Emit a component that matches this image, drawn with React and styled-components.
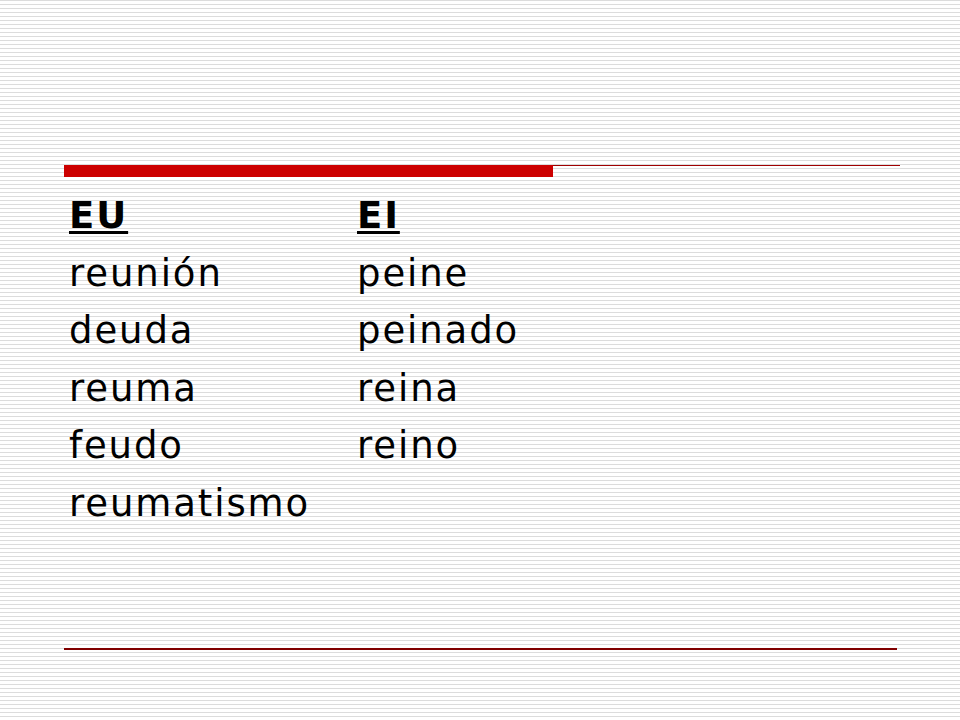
import React from "react";
import styled, { createGlobalStyle } from "styled-components";

const GlobalStyle = createGlobalStyle`
  html, body {
    margin: 0;
    padding: 0;
  }
  body {
    width: 960px;
    height: 720px;
    overflow: hidden;
    font-family: "DejaVu Sans", Verdana, sans-serif;
  }
`;

const Slide = styled.div`
  width: 960px;
  height: 720px;
  box-sizing: border-box;
  padding: 165px 60px 0 64px;
  display: flex;
  flex-direction: column;
  background-color: #fff;
  background-image: repeating-linear-gradient(
    to bottom,
    #dcdcdc 0px,
    #dcdcdc 1px,
    #ffffff 1px,
    #ffffff 4px
  );
`;

const TopRule = styled.div`
  display: flex;
  align-items: flex-start;
  height: 12px;
`;

const RedBar = styled.div`
  width: 489px;
  height: 12px;
  background: #cc0000;
`;

const ThinLine = styled.div`
  flex: 1;
  height: 1px;
  background: #a00000;
`;

const Columns = styled.div`
  display: grid;
  grid-template-columns: 288px 1fr;
  padding: 10px 0 0 5px;
  height: 461px;
`;

const Column = styled.div`
  display: flex;
  flex-direction: column;
`;

const Word = styled.div`
  font-size: 37px;
  letter-spacing: 1.9px;
  line-height: 57.5px;
  color: #000;
  font-weight: ${(p) => (p.$head ? 700 : 400)};
  text-decoration: ${(p) => (p.$head ? "underline" : "none")};
  text-decoration-thickness: 3px;
  text-underline-offset: 3px;
`;

const BottomRule = styled.div`
  width: 833px;
  height: 2px;
  background: #800000;
`;

const columns = [
  { head: "EU", words: ["reunión", "deuda", "reuma", "feudo", "reumatismo"] },
  { head: "EI", words: ["peine", "peinado", "reina", "reino"] },
];

export default function App() {
  return (
    <>
      <GlobalStyle />
      <Slide>
        <TopRule>
          <RedBar />
          <ThinLine />
        </TopRule>
        <Columns>
          {columns.map((c) => (
            <Column key={c.head}>
              <Word $head>{c.head}</Word>
              {c.words.map((w) => (
                <Word key={w}>{w}</Word>
              ))}
            </Column>
          ))}
        </Columns>
        <BottomRule />
      </Slide>
    </>
  );
}
